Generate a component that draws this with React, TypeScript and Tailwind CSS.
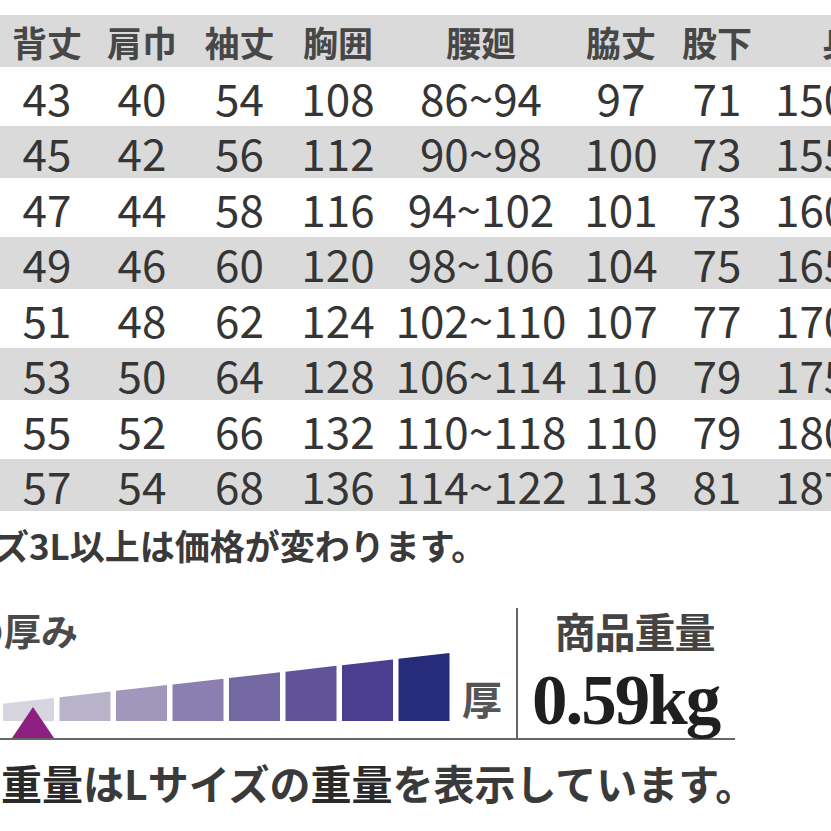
import React from 'react';

const headers = ['背丈', '肩巾', '袖丈', '胸囲', '腰廻', '脇丈', '股下', '身長'];

const rows: (string | number)[][] = [
  [43, 40, 54, 108, '86~94', 97, 71, 150],
  [45, 42, 56, 112, '90~98', 100, 73, 155],
  [47, 44, 58, 116, '94~102', 101, 73, 160],
  [49, 46, 60, 120, '98~106', 104, 75, 165],
  [51, 48, 62, 124, '102~110', 107, 77, 170],
  [53, 50, 64, 128, '106~114', 110, 79, 175],
  [55, 52, 66, 132, '110~118', 110, 79, 180],
  [57, 54, 68, 136, '114~122', 113, 81, 187],
];

const barColors = ['#d8d5e0', '#b9b2cb', '#a197bd', '#8a7fb0', '#7468a3', '#615399', '#4b3d8f', '#262b7a'];

const cols = 'grid grid-cols-[94px_96px_99px_98px_188px_92px_100px_86px] items-center';

// 厚みゲージ: 上辺が右上がりの棒
const ThicknessBars: React.FC = () => {
  const top = (x: number) => 58 - 0.1133 * x;
  return (
    <svg width="458" height="92" viewBox="0 0 458 92" className="block">
      {barColors.map((c, i) => {
        const x0 = 3 + 56.5 * i;
        const x1 = x0 + 51;
        return (
          <polygon
            key={i}
            points={`${x0},${top(x0)} ${x1},${top(x1)} ${x1},75 ${x0},75`}
            fill={c}
          />
        );
      })}
      <polygon points="12,92 54,92 33,61" fill="#8d1f80" />
    </svg>
  );
};

const App: React.FC = () => {
  return (
    <div className="w-[831px] h-[831px] overflow-hidden bg-white text-[#353535] font-['Noto_Sans_CJK_JP',sans-serif]">
      {/* サイズ表 */}
      <div className="pt-[15px]">
        <div className={`${cols} h-[52px] bg-[#dadada] text-[35px] font-bold text-[#474747] leading-none`}>
          {headers.map((h, i) => (
            <div key={h} className={i === 7 ? 'pl-[55px] whitespace-nowrap' : 'text-center whitespace-nowrap'}>
              {h}
            </div>
          ))}
        </div>
        {rows.map((r, ri) => (
          <div
            key={ri}
            className={`${cols} text-[44px] leading-none ${ri % 2 === 0 ? 'h-[59px] bg-white' : 'h-[52px] bg-[#dadada]'}`}
          >
            {r.map((v, ci) => (
              <div key={ci} className={ci === 7 ? 'pl-[8px] whitespace-nowrap' : 'text-center whitespace-nowrap'}>
                {v}
              </div>
            ))}
          </div>
        ))}
      </div>

      <p className="mt-[14px] -ml-[75px] text-[35px] leading-[40px] font-bold whitespace-nowrap text-[#3a3a3a]">
        サイズ3L以上は価格が変わります。
      </p>

      {/* 生地の厚み / 商品重量 */}
      <div className="mt-[43px]">
        <div className="flex items-stretch">
          <div className="w-[516px] flex flex-col">
            <p className="-ml-[107px] text-[37px] leading-[44px] font-bold text-[#4a4a4a] whitespace-nowrap">
              生地の厚み
            </p>
            <div className="-mt-[6px] flex items-start">
              <ThicknessBars />
              <span className="mt-[32px] ml-[4px] text-[40px] leading-none font-bold text-[#555]">厚</span>
            </div>
          </div>
          <div className="w-[2px] bg-[#666]" />
          <div className="flex flex-col items-center pl-[14px]">
            <p className="ml-[18px] text-[41px] leading-[44px] font-bold text-[#444] tracking-[-1px]">商品重量</p>
            <p className="mt-[18px] font-['Liberation_Serif',serif] font-bold text-[71px] leading-[60px] tracking-[-2px] text-[#1f1f1f]">
              0.59kg
            </p>
          </div>
        </div>
        <div className="h-[2px] w-[735px] bg-[#666]" />
      </div>

      <p className="mt-[20px] -ml-[81px] text-[41px] leading-[44px] font-bold whitespace-nowrap text-[#3a3a3a]">
        商品<span className="text-[#2a2a2a]">重量</span>はLサイズの<span className="text-[#2a2a2a]">重量</span>を表示しています。
      </p>
    </div>
  );
};

export default App;
